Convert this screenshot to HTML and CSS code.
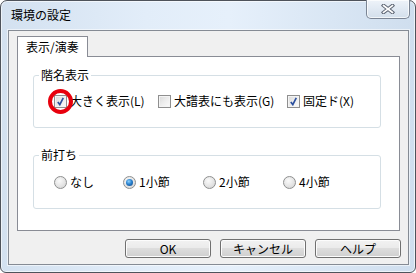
FILE: index.html
```html
<!DOCTYPE html>
<html lang="ja">
<head>
<meta charset="utf-8">
<title>環境の設定</title>
<link rel="stylesheet" href="styles.css">
</head>
<body>
<div class="window">
  <div class="titlebar">
    <span class="title">環境の設定</span>
    <button class="close" aria-label="閉じる">
      <svg width="14" height="10" viewBox="0 0 14 10">
        <path d="M2.5 1.5 L11.5 8.5 M11.5 1.5 L2.5 8.5" stroke="#5d6573" stroke-width="3.6" stroke-linecap="square" fill="none"/>
        <path d="M2.5 1.5 L11.5 8.5 M11.5 1.5 L2.5 8.5" stroke="#ffffff" stroke-width="1.6" stroke-linecap="square" fill="none"/>
      </svg>
    </button>
  </div>
  <div class="client">
    <div class="tabs"><div class="tab">表示/演奏</div></div>
    <div class="panel">
      <fieldset class="group g1">
        <legend>階名表示</legend>
        <div class="row">
          <label class="item c1"><span class="box checked marked"></span>大きく表示(L)</label>
          <label class="item c2"><span class="box"></span>大譜表にも表示(G)</label>
          <label class="item"><span class="box checked"></span>固定ド(X)</label>
        </div>
      </fieldset>
      <fieldset class="group g2">
        <legend>前打ち</legend>
        <div class="row">
          <label class="item r1"><span class="radio"></span>なし</label>
          <label class="item r2"><span class="radio on"></span>1小節</label>
          <label class="item r3"><span class="radio"></span>2小節</label>
          <label class="item"><span class="radio"></span>4小節</label>
        </div>
      </fieldset>
    </div>
    <div class="buttons">
      <button class="btn">OK</button>
      <button class="btn">キャンセル</button>
      <button class="btn">ヘルプ</button>
    </div>
  </div>
</div>
</body>
</html>
```

FILE: styles.css
```css
html, body {
  margin: 0;
  padding: 0;
  background: #ffffff;
}
body {
  font-family: "Noto Sans CJK JP", "Noto Sans", sans-serif;
  font-size: 12px;
  color: #000;
}
.window {
  width: 416px;
  height: 273px;
  box-sizing: border-box;
  border: 1px solid #4e535b;
  border-radius: 7px 7px 6px 6px;
  background: linear-gradient(90deg, #d3e1f0 0%, #e2edf9 35%, #e6f0fb 55%, #d9e6f4 80%, #cfdeee 100%);
  padding: 0 6px 7px 7px;
  display: flex;
  flex-direction: column;
  box-shadow: inset 0 0 0 1px rgba(255,255,255,0.6);
}
.titlebar {
  height: 29px;
  display: flex;
  align-items: flex-start;
  justify-content: space-between;
}
.title {
  margin-top: 7px;
  margin-left: 3px;
  line-height: 14px;
  font-size: 12px;
  color: #000;
}
.close {
  margin-top: -1px;
  margin-right: -1px;
  width: 44px;
  height: 19px;
  box-sizing: border-box;
  border: 1px solid #7b8594;
  border-top: none;
  border-radius: 0 0 5px 5px;
  background: linear-gradient(#eef3f9, #dfe8f2 55%, #d3dfeb);
  box-shadow: inset 0 0 0 1px rgba(255,255,255,0.7);
  padding: 0;
  display: flex;
  align-items: center;
  justify-content: center;
}
.close svg { display: block; margin-top: 0; }
.client {
  height: 235px;
  box-sizing: border-box;
  border: 1px solid #858b94;
  background: #f0f0f0;
  padding: 5px 8px 0 8px;
  display: flex;
  flex-direction: column;
  box-shadow: 0 0 0 1px rgba(255,255,255,0.55);
}
.tabs {
  display: flex;
  position: relative;
  z-index: 1;
}
.tab {
  width: 71px;
  height: 20px;
  box-sizing: border-box;
  border: 1px solid #898c95;
  border-bottom: none;
  background: #fff;
  padding-left: 8px;
  line-height: 20px;
  margin-bottom: -1px;
  height: 21px;
}
.panel {
  height: 175px;
  box-sizing: border-box;
  border: 1px solid #898c95;
  background: #fff;
  padding: 0 18px 0 15px;
  display: flex;
  flex-direction: column;
}
.group {
  margin: 0;
  padding: 0;
  border: 1px solid #d5dfe5;
  border-radius: 3px;
  min-width: 0;
}
.g1 { margin-top: 11px; }
.g2 { margin-top: 20px; }
.group legend {
  margin-left: 5px;
  padding: 0 2px;
  line-height: 14px;
  font-size: 12px;
}
.row {
  display: flex;
  align-items: center;
  height: 14px;
  margin: 12px 0 19px 20px;
  line-height: 14px;
  white-space: nowrap;
}
.g2 .row { margin-top: 13px; }
.item {
  display: flex;
  align-items: center;
}
.c1 { width: 104px; }
.c2 { width: 129px; }
.r1 { width: 69px; }
.r2 { width: 80px; }
.r3 { width: 80px; }
.box {
  position: relative;
  width: 13px;
  height: 13px;
  box-sizing: border-box;
  border: 1px solid #8f8f8f;
  background: linear-gradient(135deg, #d9d9d9 0%, #ededed 50%, #fbfbfb 100%);
  box-shadow: inset 0 0 0 1px #f4f4f4;
  margin-right: 3px;
  flex: none;
}
.box.checked::before {
  content: "";
  position: absolute;
  left: 2px;
  top: 1px;
  width: 7px;
  height: 9px;
  background: no-repeat center/contain url("data:image/svg+xml;utf8,<svg xmlns='http://www.w3.org/2000/svg' viewBox='0 0 7 9'><path d='M0.8 5 L2.8 7.6 L6.3 0.8' stroke='%232b4f9e' stroke-width='1.7' fill='none'/></svg>");
}
.box.marked::after {
  content: "";
  position: absolute;
  left: -7px;
  top: -7px;
  width: 25px;
  height: 25px;
  box-sizing: border-box;
  border: 4px solid #e8000d;
  border-radius: 50%;
}
.radio {
  position: relative;
  width: 13px;
  height: 13px;
  box-sizing: border-box;
  border-radius: 50%;
  border: 1px solid #8e8f8f;
  background: radial-gradient(circle at 40% 35%, #fafafa 0%, #e4e4e4 55%, #cfcfcf 100%);
  margin-right: 3px;
  flex: none;
}
.radio.on::after {
  content: "";
  position: absolute;
  left: 2px;
  top: 2px;
  width: 7px;
  height: 7px;
  border-radius: 50%;
  background: radial-gradient(circle at 40% 35%, #8fd3ff 0%, #2a82cf 45%, #0d3f7d 100%);
}
.buttons {
  display: flex;
  justify-content: flex-end;
  gap: 9px;
  margin-top: 8px;
  padding-right: 0;
  margin-right: -1px;
}
.btn {
  width: 86px;
  height: 19px;
  box-sizing: border-box;
  border: 1px solid #707070;
  border-radius: 3px;
  background: linear-gradient(#f2f2f2 0%, #ebebeb 45%, #dddddd 50%, #cfcfcf 100%);
  box-shadow: inset 0 0 0 1px #fcfcfc;
  font-family: "Noto Sans CJK JP", "Noto Sans", sans-serif;
  font-size: 12px;
  line-height: 16px;
  padding: 0;
  color: #000;
}
```
